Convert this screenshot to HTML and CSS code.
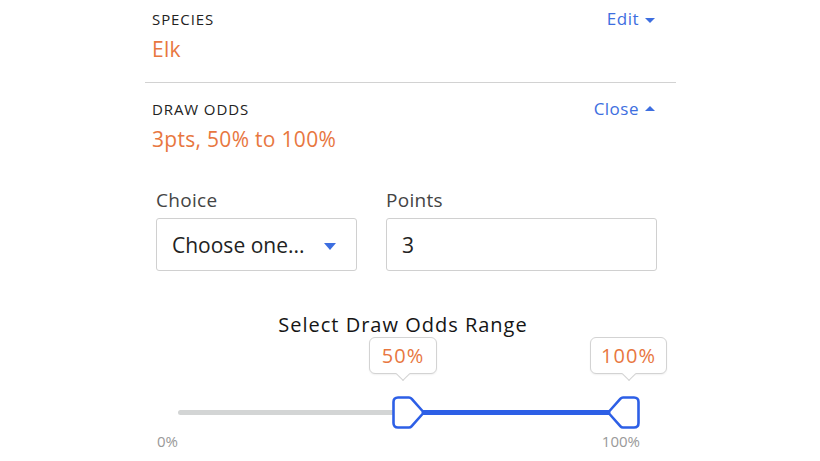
FILE: index.html
```html
<!DOCTYPE html>
<html lang="en">
<head>
<meta charset="utf-8">
<title>Draw Odds</title>
<link rel="stylesheet" href="styles.css">
</head>
<body>
<div class="panel">
  <section class="summary first">
    <div class="summary-text">
      <div class="label">SPECIES</div>
      <div class="value">Elk</div>
    </div>
    <a class="toggle">Edit <span class="caret down"></span></a>
  </section>
  <section class="summary second">
    <div class="summary-text">
      <div class="label">DRAW ODDS</div>
      <div class="value">3pts, 50% to 100%</div>
    </div>
    <a class="toggle">Close <span class="caret up"></span></a>
  </section>
  <div class="form">
    <div class="field choice">
      <div class="field-label">Choice</div>
      <div class="select"><span>Choose one...</span><span class="caret select-caret"></span></div>
    </div>
    <div class="field points">
      <div class="field-label">Points</div>
      <div class="input">3</div>
    </div>
  </div>
  <div class="range-block">
    <div class="range-title">Select Draw Odds Range</div>
    <div class="range">
      <div class="track"></div>
      <div class="track-fill"></div>
      <div class="tip tip-low">50%</div>
      <div class="tip tip-high">100%</div>
      <svg class="thumb thumb-low" width="33" height="33" viewBox="0 0 33 33">
        <path d="M6 1.5 H17 Q18.5 1.5 19.5 2.7 L30.5 15 Q31.3 16.5 30.5 18 L19.5 30.3 Q18.5 31.5 17 31.5 H6 Q1.5 31.5 1.5 27 V6 Q1.5 1.5 6 1.5 Z" fill="#fff" stroke="#2d5fe6" stroke-width="2.6" stroke-linejoin="round"/>
      </svg>
      <svg class="thumb thumb-high" width="33" height="33" viewBox="0 0 33 33">
        <path d="M27 1.5 H16 Q14.5 1.5 13.5 2.7 L2.5 15 Q1.7 16.5 2.5 18 L13.5 30.3 Q14.5 31.5 16 31.5 H27 Q31.5 31.5 31.5 27 V6 Q31.5 1.5 27 1.5 Z" fill="#fff" stroke="#2d5fe6" stroke-width="2.6" stroke-linejoin="round"/>
      </svg>
    </div>
    <div class="range-labels">
      <span>0%</span>
      <span>100%</span>
    </div>
  </div>
</div>
</body>
</html>
```

FILE: styles.css
```css
* { box-sizing: border-box; }
body {
  margin: 0;
  background: #fff;
  font-family: "Open Sans", "Liberation Sans", sans-serif;
  color: #222;
}
.panel {
  width: 531px;
  margin-left: 145px;
}
.summary {
  display: flex;
  justify-content: space-between;
  align-items: flex-start;
  padding: 0 21px 0 7px;
}
.summary.first {
  padding-top: 9px;
  padding-bottom: 20px;
  border-bottom: 1px solid #d2d2d2;
}
.summary.second {
  padding-top: 16px;
}
.label {
  font-size: 15px;
  line-height: 20px;
  color: #222;
  letter-spacing: 0.9px;
}
.value {
  margin-top: 7px;
  font-size: 21px;
  line-height: 26px;
  color: #e8773f;
  letter-spacing: 0.3px;
}
.toggle {
  display: flex;
  align-items: center;
  gap: 6px;
  font-size: 17px;
  line-height: 20px;
  letter-spacing: 0.5px;
  color: #3d6ee0;
}
.caret {
  width: 0;
  height: 0;
  border-left: 5px solid transparent;
  border-right: 5px solid transparent;
}
.caret.down { border-top: 5px solid #3d6ee0; margin-top: 2px; }
.caret.up { border-bottom: 5px solid #3d6ee0; margin-top: -1px; }
.form {
  display: flex;
  gap: 29px;
  padding: 36px 19px 0 11px;
}
.field-label {
  font-size: 19px;
  line-height: 24px;
  color: #444;
  margin-bottom: 6px;
  letter-spacing: 0.3px;
}
.choice { width: 201px; }
.points { flex: 1; }
.select, .input {
  height: 53px;
  border: 1px solid #d0d0d0;
  border-radius: 3px;
  display: flex;
  align-items: center;
  font-size: 21px;
  color: #222;
  padding: 0 15px;
}
.select { justify-content: space-between; padding-right: 20px; }
.select-caret {
  border-left: 6px solid transparent;
  border-right: 6px solid transparent;
  border-top: 7px solid #3d6ee0;
  margin-top: 4px;
}
.range-block {
  padding-top: 42px;
}
.range-title {
  width: 450px;
  margin-left: 33px;
  text-align: center;
  font-size: 20px;
  line-height: 24px;
  letter-spacing: 1px;
  color: #151515;
}
.range {
  position: relative;
  width: 450px;
  height: 94px;
  margin-left: 33px;
}
.track {
  position: absolute;
  left: 0;
  top: 73px;
  width: 225px;
  height: 5px;
  border-radius: 3px;
  background: #d3d5d5;
}
.track-fill {
  position: absolute;
  left: 225px;
  top: 73px;
  width: 225px;
  height: 5px;
  background: #2d5fe6;
}
.tip {
  position: absolute;
  top: 0;
  height: 37px;
  border: 1.5px solid #d3d3d3;
  border-radius: 6px;
  background: #fff;
  color: #e8773f;
  font-size: 20px;
  letter-spacing: 1px;
  display: flex;
  align-items: center;
  justify-content: center;
  box-shadow: 0 1px 2px rgba(0,0,0,0.06);
}
.tip::after {
  content: "";
  position: absolute;
  left: 50%;
  bottom: -6px;
  width: 9px;
  height: 9px;
  margin-left: -5px;
  background: #fff;
  border-right: 1.5px solid #d3d3d3;
  border-bottom: 1.5px solid #d3d3d3;
  transform: rotate(45deg);
}
.tip-low { left: 191px; width: 68px; }
.tip-high { left: 412px; width: 77px; }
.thumb {
  position: absolute;
  top: 59px;
}
.thumb-low { left: 214px; }
.thumb-high { left: 429px; }
.range-labels {
  display: flex;
  justify-content: space-between;
  width: 483px;
  margin-left: 12px;
  font-size: 15px;
  line-height: 20px;
  color: #999;
}
```
